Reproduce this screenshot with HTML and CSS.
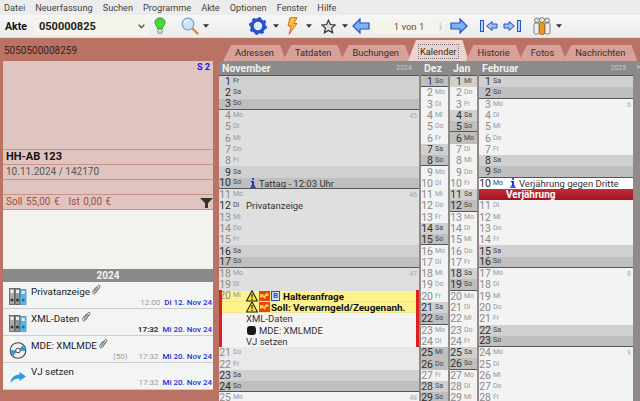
FILE: index.html
```html
<!DOCTYPE html>
<html lang="de">
<head>
  <meta charset="UTF-8" />
  <title>Akte 050000825</title>
  <link rel="stylesheet" href="styles.css">
</head>
<body>

  <svg class="defs" width="0" height="0">
    <symbol id="drop" viewBox="0 0 7 4"><path d="M0 0h7L3.500 4z" fill="#333"/></symbol>
    <symbol id="warn" viewBox="0 0 12 12"><path d="M6 .8 11.500 11H.5z" fill="#fbe33a" stroke="#222" stroke-width="1.100" stroke-linejoin="round"/><path d="M5.400 4h1.200l-.2 4h-.8zM5.400 8.800h1.200V10H5.400z" fill="#111"/></symbol>
    <symbol id="flag" viewBox="0 0 11 10"><rect width="11" height="10" fill="#e8401c"/><path d="M1 3h3l1 2 2-3 3 1-1 2H7l-1 3-2-2-3 1z" fill="#f8d040"/></symbol>
    <symbol id="info" viewBox="0 0 7 12"><path d="M2.600 0h2v2.200h-2zM1 3.500h3.600V9H6v1.400H1V9h1.400V5H1zM0 11h7v1H0z" fill="#1020e0"/></symbol>
    <symbol id="binders" viewBox="0 0 18 17"><g stroke="#444" stroke-width=".7"><rect x=".5" y=".5" width="5" height="16" fill="#aaa"/><rect x="6" y=".5" width="5" height="16" fill="#999"/><rect x="11.500" y="1.500" width="5.500" height="15" fill="#5cb4e4" stroke="#3a8fc0"/></g><g fill="#eee"><rect x="1.500" y="2" width="3" height="3"/><rect x="7" y="2" width="3" height="3"/><rect x="12.700" y="3" width="3" height="3"/></g><g fill="#333"><circle cx="3" cy="12" r="1.500"/><circle cx="8.500" cy="12" r="1.500"/></g><circle cx="14.200" cy="12" r="1.500" fill="#1f6f9f"/></symbol>
    <symbol id="clip" viewBox="0 0 10 11"><path d="M2 6.500 6 1.700c1-1.100 2.700.3 1.700 1.500L3.400 8.300c-.6.7-1.700-.1-1-1L6 3.200M7.700 3.200 3.500 9.200C2 11-.6 9 1 7l3-3.800" fill="none" stroke="#666" stroke-width=".9"/></symbol>
  </svg>

  <div class="menubar">
    <span>Datei</span><span>Neuerfassung</span><span>Suchen</span><span>Programme</span><span>Akte</span><span>Optionen</span><span>Fenster</span><span>Hilfe</span>
  </div>

  <div class="toolbar">
    <b class="akte-label">Akte</b>
    <div class="combo"><b>050000825</b>
      <svg width="7" height="5" viewBox="0 0 7 5"><path d="M.7.7 3.500 3.800 6.300.7" fill="none" stroke="#555" stroke-width="1.400"/></svg>
    </div>
    <svg class="bulb" width="12" height="18" viewBox="0 0 12 18"><path d="M6 1C2.700 1 1 3 1 5.500 1 8 3.500 9.500 3.800 12h4.400C8.500 9.500 11 8 11 5.500 11 3 9.300 1 6 1z" fill="#47d83a" stroke="#2c9a28"/><rect x="3.800" y="12" width="4.400" height="4.500" rx="1.500" fill="#ddd" stroke="#888"/></svg>
    <svg class="lens" width="18" height="18" viewBox="0 0 18 18"><path d="M10.500 10.500 16.500 16.500" stroke="#e08a30" stroke-width="2.400" stroke-linecap="round"/><circle cx="7" cy="7" r="5.800" fill="#cfe6f8" stroke="#7c9fc4" stroke-width="1.300"/><path d="M3.500 6C4 4 5.500 3 7.500 3" stroke="#fff" fill="none" stroke-width="1.200"/></svg>
    <svg class="drop drop-lens" width="6" height="4"><use href="#drop"/></svg>
    <svg class="gear" width="18" height="18" viewBox="0 0 18 18"><circle cx="9" cy="9" r="6" fill="none" stroke="#2a50d0" stroke-width="3.600"/><circle cx="9" cy="9" r="8" fill="none" stroke="#2a50d0" stroke-width="2" stroke-dasharray="3 3.280"/><circle cx="9" cy="9" r="3.200" fill="#dfe8fa"/></svg>
    <svg class="drop" width="6" height="4"><use href="#drop"/></svg>
    <svg class="bolt" width="11" height="18" viewBox="0 0 11 18"><path d="M3 .7h7L6.800 6.500H10L2 17.300 4.300 9H1z" fill="#f8c530" stroke="#d8552a" stroke-width=".9"/></svg>
    <svg class="drop drop-bolt" width="6" height="4"><use href="#drop"/></svg>
    <svg class="star" width="15" height="15" viewBox="0 0 15 15"><path d="M7.500 1.200 9.400 5.500 14 6 10.600 9.100 11.600 13.800 7.500 11.400 3.400 13.800 4.400 9.100 1 6 5.600 5.500z" fill="#ddd" stroke="#333" stroke-width="1.200"/></svg>
    <svg class="drop" width="6" height="4"><use href="#drop"/></svg>
    <svg class="arrow-left" width="18" height="16" viewBox="0 0 18 16"><path d="M8 1 1 8l7 7v-4h9V5H8z" fill="#7fb2f0" stroke="#2255cc" stroke-width="1.200"/></svg>
    <div class="pager">1 von 1<i class="pager-i">i</i></div>
    <svg class="arrow-right" width="18" height="16" viewBox="0 0 18 16"><path d="M10 1l7 7-7 7v-4H1V5h9z" fill="#7fb2f0" stroke="#2255cc" stroke-width="1.200"/></svg>
    <svg class="jump-first" width="18" height="12" viewBox="0 0 18 12"><rect x=".5" y=".5" width="3" height="11" fill="#bcd4f4" stroke="#2255cc"/><path d="M12 1.500 6.500 6l5.500 4.500V8h5V4h-5z" fill="#9cc0f0" stroke="#2255cc"/></svg>
    <svg class="jump-last" width="18" height="12" viewBox="0 0 18 12"><path d="M6 1.500 11.500 6 6 10.500V8H1V4h5z" fill="#9cc0f0" stroke="#2255cc"/><rect x="14.500" y=".5" width="3" height="11" fill="#bcd4f4" stroke="#2255cc"/></svg>
    <svg class="people" width="18" height="18" viewBox="0 0 18 18"><circle cx="4" cy="3.500" r="2.500" fill="#ddd" stroke="#555" stroke-width=".7"/><rect x="1" y="6" width="5" height="11" rx="1.500" fill="#eee" stroke="#555" stroke-width=".7"/><circle cx="14" cy="3.500" r="2.500" fill="#ddd" stroke="#555" stroke-width=".7"/><rect x="12" y="6" width="5" height="11" rx="1.500" fill="#eee" stroke="#555" stroke-width=".7"/><circle cx="9" cy="3" r="2.500" fill="#e8e8e8" stroke="#555" stroke-width=".7"/><rect x="6.500" y="5.500" width="5" height="12" rx="1.500" fill="#ef9a1f" stroke="#9a5a10" stroke-width=".7"/></svg>
    <svg class="drop drop-people" width="6" height="4"><use href="#drop"/></svg>
  </div>

  <div class="main">
    <aside class="left">
      <div class="case-no">5050500008259</div>

      <div class="case-card">
        <div class="photo"><b>S 2</b></div>
        <div class="line plate">HH-AB 123</div>
        <div class="line">10.11.2024 / 142170</div>
        <div class="line"></div>
        <div class="line money">
          <span>Soll 55,00 €</span><span>Ist 0,00 €</span>
          <svg class="funnel" width="13" height="10" viewBox="0 0 13 10"><path d="M0 0h13L8 5v5H5V5z" fill="#333"/></svg>
        </div>
      </div>
      <div class="notes"></div>

      <div class="year">2024</div>
      <ul class="history">
        <li>
          <svg class="h-icon" width="18" height="17"><use href="#binders"/></svg>
          <div class="h-title">Privatanzeige <svg width="10" height="11"><use href="#clip"/></svg></div>
          <div class="h-meta"><span class="h-time">12:00</span><span class="h-date">Di 12. Nov 24</span></div>
        </li>
        <li>
          <svg class="h-icon" width="18" height="17"><use href="#binders"/></svg>
          <div class="h-title">XML-Daten <svg width="10" height="11"><use href="#clip"/></svg></div>
          <div class="h-meta"><span class="h-time now">17:32</span><span class="h-date">Mi 20. Nov 24</span></div>
        </li>
        <li>
          <svg class="h-icon" width="18" height="17" viewBox="0 0 18 17"><circle cx="9" cy="8.500" r="7.800" fill="#eee" stroke="#444" stroke-width="1.100"/><path d="M9 8.500 14 3A7.500 7.500 0 0 1 16 9zM9 8.500 4 14A7.500 7.500 0 0 1 2 8z" fill="#3a9ad0"/><circle cx="9" cy="8.500" r="2.300" fill="#fff" stroke="#444"/></svg>
          <div class="h-title">MDE: XMLMDE <svg width="10" height="11"><use href="#clip"/></svg></div>
          <div class="h-meta"><span class="h-count">(50)</span><span class="h-time">17:32</span><span class="h-date">Mi 20. Nov 24</span></div>
        </li>
        <li>
          <svg class="h-icon" width="16" height="11" viewBox="0 0 16 11"><path d="M9.500 0 16 4.500 9.500 9V6.500C5.500 6.500 3 7.800.5 11 1 6 4 2.800 9.500 2.500z" fill="#2e9bdb"/></svg>
          <div class="h-title">VJ setzen</div>
          <div class="h-meta"><span class="h-time">17:32</span><span class="h-date">Mi 20. Nov 24</span></div>
        </li>
      </ul>
    </aside>

    <section class="right">
      <nav class="tabs">
        <span class="tab">Adressen</span>
        <span class="tab">Tatdaten</span>
        <span class="tab">Buchungen</span>
        <span class="tab active"><em>Kalender</em></span>
        <span class="tab">Historie</span>
        <span class="tab">Fotos</span>
        <span class="tab">Nachrichten</span>
      </nav>

      <div class="calendar">
        <div class="month nov">
          <header><b>November</b><small>2024</small></header>
          <div class="day sa"><i>1</i><u>Fr</u></div>
          <div class="day sa"><i>2</i><u>Sa</u></div>
          <div class="day so wk"><i>3</i><u>So</u></div>
          <div class="day"><i>4</i><u>Mo</u><small>45</small></div>
          <div class="day"><i>5</i><u>Di</u></div>
          <div class="day"><i>6</i><u>Mi</u></div>
          <div class="day"><i>7</i><u>Do</u></div>
          <div class="day"><i>8</i><u>Fr</u></div>
          <div class="day sa"><i>9</i><u>Sa</u></div>
          <div class="day so wk"><i>10</i><u>So</u>
            <span class="ev ev-icon"><svg width="6" height="10"><use href="#info"/></svg>Tattag - 12:03 Uhr</span></div>
          <div class="day"><i>11</i><u>Mo</u><small>46</small></div>
          <div class="day has"><i>12</i><u>Di</u><span class="ev">Privatanzeige</span></div>
          <div class="day"><i>13</i><u>Mi</u></div>
          <div class="day"><i>14</i><u>Do</u></div>
          <div class="day"><i>15</i><u>Fr</u></div>
          <div class="day sa"><i>16</i><u>Sa</u></div>
          <div class="day so wk"><i>17</i><u>So</u></div>
          <div class="day"><i>18</i><u>Mo</u><small>47</small></div>
          <div class="day"><i>19</i><u>Di</u></div>
          <div class="today">
            <div class="day alert"><i>20</i><u>Mi</u>
              <span class="ev bold"><svg width="12" height="12"><use href="#warn"/></svg><svg width="11" height="10"><use href="#flag"/></svg><span class="b-box">B</span>Halteranfrage</span></div>
            <div class="day alert"><span class="ev bold"><svg width="12" height="12"><use href="#warn"/></svg><svg width="11" height="10"><use href="#flag"/></svg>Soll: Verwarngeld/Zeugenanh.</span></div>
            <div class="day light"><span class="ev">XML-Daten</span></div>
            <div class="day light"><span class="ev"><span class="dot"></span>MDE: XMLMDE</span></div>
            <div class="day light"><span class="ev">VJ setzen</span></div>
          </div>
          <div class="day lighter"><i>21</i><u>Do</u></div>
          <div class="day lighter"><i>22</i><u>Fr</u></div>
          <div class="day sa"><i>23</i><u>Sa</u></div>
          <div class="day so wk"><i>24</i><u>So</u></div>
          <div class="day light"><i>25</i><u>Mo</u><small>48</small></div>
        </div>

        <div class="month small">
          <header><b>Dez</b></header>
          <div class="day so wk"><i>1</i><u>So</u></div>
          <div class="day light"><i>2</i><u>Mo</u></div>
          <div class="day light"><i>3</i><u>Di</u></div>
          <div class="day light"><i>4</i><u>Mi</u></div>
          <div class="day light"><i>5</i><u>Do</u></div>
          <div class="day light"><i>6</i><u>Fr</u></div>
          <div class="day sa"><i>7</i><u>Sa</u></div>
          <div class="day so wk"><i>8</i><u>So</u></div>
          <div class="day light"><i>9</i><u>Mo</u></div>
          <div class="day light"><i>10</i><u>Di</u></div>
          <div class="day light"><i>11</i><u>Mi</u></div>
          <div class="day light"><i>12</i><u>Do</u></div>
          <div class="day light"><i>13</i><u>Fr</u></div>
          <div class="day sa"><i>14</i><u>Sa</u></div>
          <div class="day so wk"><i>15</i><u>So</u></div>
          <div class="day light"><i>16</i><u>Mo</u></div>
          <div class="day light"><i>17</i><u>Di</u></div>
          <div class="day light"><i>18</i><u>Mi</u></div>
          <div class="day light"><i>19</i><u>Do</u></div>
          <div class="day light"><i>20</i><u>Fr</u></div>
          <div class="day sa"><i>21</i><u>Sa</u></div>
          <div class="day so wk"><i>22</i><u>So</u></div>
          <div class="day light"><i>23</i><u>Mo</u></div>
          <div class="day light"><i>24</i><u>Di</u></div>
          <div class="day so"><i>25</i><u>Mi</u></div>
          <div class="day so"><i>26</i><u>Do</u></div>
          <div class="day light"><i>27</i><u>Fr</u></div>
          <div class="day sa"><i>28</i><u>Sa</u></div>
          <div class="day so wk"><i>29</i><u>So</u></div>
        </div>

        <div class="month small">
          <header><b>Jan</b></header>
          <div class="day sa"><i>1</i><u>Mi</u></div>
          <div class="day light"><i>2</i><u>Do</u></div>
          <div class="day light"><i>3</i><u>Fr</u></div>
          <div class="day sa"><i>4</i><u>Sa</u></div>
          <div class="day so wk"><i>5</i><u>So</u></div>
          <div class="day so"><i>6</i><u>Mo</u></div>
          <div class="day light"><i>7</i><u>Di</u></div>
          <div class="day light"><i>8</i><u>Mi</u></div>
          <div class="day light"><i>9</i><u>Do</u></div>
          <div class="day light"><i>10</i><u>Fr</u></div>
          <div class="day sa"><i>11</i><u>Sa</u></div>
          <div class="day so wk"><i>12</i><u>So</u></div>
          <div class="day light"><i>13</i><u>Mo</u></div>
          <div class="day light"><i>14</i><u>Di</u></div>
          <div class="day light"><i>15</i><u>Mi</u></div>
          <div class="day light"><i>16</i><u>Do</u></div>
          <div class="day light"><i>17</i><u>Fr</u></div>
          <div class="day sa"><i>18</i><u>Sa</u></div>
          <div class="day so wk"><i>19</i><u>So</u></div>
          <div class="day light"><i>20</i><u>Mo</u></div>
          <div class="day light"><i>21</i><u>Di</u></div>
          <div class="day light"><i>22</i><u>Mi</u></div>
          <div class="day light"><i>23</i><u>Do</u></div>
          <div class="day light"><i>24</i><u>Fr</u></div>
          <div class="day sa"><i>25</i><u>Sa</u></div>
          <div class="day so wk"><i>26</i><u>So</u></div>
          <div class="day light"><i>27</i><u>Mo</u></div>
          <div class="day light"><i>28</i><u>Di</u></div>
          <div class="day light"><i>29</i><u>Mi</u></div>
        </div>

        <div class="month feb">
          <header><b>Februar</b><small>2025</small></header>
          <div class="day sa"><i>1</i><u>Sa</u></div>
          <div class="day so wk"><i>2</i><u>So</u></div>
          <div class="day light"><i>3</i><u>Mo</u><small>6</small></div>
          <div class="day light"><i>4</i><u>Di</u></div>
          <div class="day light"><i>5</i><u>Mi</u></div>
          <div class="day light"><i>6</i><u>Do</u></div>
          <div class="day light"><i>7</i><u>Fr</u></div>
          <div class="day sa"><i>8</i><u>Sa</u></div>
          <div class="day so wk"><i>9</i><u>So</u></div>
          <div class="day white has"><i>10</i><u>Mo</u>
            <span class="ev ev-icon"><svg width="6" height="10"><use href="#info"/></svg>Verjährung gegen Dritte</span></div>
          <div class="day deadline">Verjährung</div>
          <div class="day light"><i>11</i><u>Di</u></div>
          <div class="day light"><i>12</i><u>Mi</u></div>
          <div class="day light"><i>13</i><u>Do</u></div>
          <div class="day light"><i>14</i><u>Fr</u></div>
          <div class="day sa"><i>15</i><u>Sa</u></div>
          <div class="day so wk"><i>16</i><u>So</u></div>
          <div class="day light"><i>17</i><u>Mo</u><small>8</small></div>
          <div class="day light"><i>18</i><u>Di</u></div>
          <div class="day light"><i>19</i><u>Mi</u></div>
          <div class="day light"><i>20</i><u>Do</u></div>
          <div class="day light"><i>21</i><u>Fr</u></div>
          <div class="day sa"><i>22</i><u>Sa</u></div>
          <div class="day so wk"><i>23</i><u>So</u></div>
          <div class="day light"><i>24</i><u>Mo</u><small>9</small></div>
          <div class="day light"><i>25</i><u>Di</u></div>
          <div class="day light"><i>26</i><u>Mi</u></div>
          <div class="day light"><i>27</i><u>Do</u></div>
          <div class="day light"><i>28</i><u>Fr</u></div>
        </div>
        <span class="more">»</span>
      </div>
    </section>
  </div>

</body>
</html>
```

FILE: styles.css
```css
* {
  box-sizing: border-box;
}

html, body {
  margin: 0;
  height: 401px;
  overflow: hidden;
}

body {
  font-family: Roboto, sans-serif;
  font-size: 10px;
  color: #333;
  background: #b97264;
}

.defs {
  position: absolute;
}

/* menu + toolbar */
.menubar {
  height: 15px;
  background: #ececec;
  display: flex;
  align-items: center;
  padding-left: 4px;
  gap: 10px;
  font-size: 9.200px;
  color: #444;
}

.toolbar {
  height: 23px;
  background: linear-gradient(#f6f6f6, #ebebeb);
  border-bottom: 1px solid #ddd;
  display: flex;
  align-items: center;
  padding-left: 5px;
}

.toolbar svg {
  flex: none;
}

.akte-label {
  font-size: 10.500px;
  color: #111;
  width: 29px;
}

.combo {
  width: 114px;
  height: 17px;
  background: #f5f4ea;
  display: flex;
  align-items: center;
  justify-content: space-between;
  padding: 0 3px 0 5px;
  font-size: 11px;
  color: #222;
}

.bulb { margin-left: 6px; }
.lens { margin-left: 15px; }
.drop { margin-left: 6px; }
.drop-lens { margin-left: 4px; }
.drop-bolt { margin-left: 8px; }
.drop-people { margin-left: 5px; }
.gear { margin-left: 40px; }
.bolt { margin-left: 8px; }
.star { margin-left: 9px; }
.arrow-left { margin-left: 4px; }
.arrow-right { margin-left: 5px; }
.jump-first { margin-left: 12px; }
.jump-last { margin-left: 5px; }
.people { margin-left: 12px; }

.pager {
  width: 72px;
  height: 15px;
  margin-left: 3px;
  background: #f5f4ea;
  display: flex;
  align-items: center;
  justify-content: center;
  position: relative;
  color: #555;
  font-size: 9.500px;
}

.pager-i {
  position: absolute;
  right: 3px;
  top: 1px;
  font: bold 11px "Liberation Serif", serif;
  color: #ccc;
}

/* main split */
.main {
  display: flex;
  height: 363px;
}

.left {
  width: 219px;
  flex: none;
  padding-left: 3px;
}

.case-no {
  height: 23px;
  font-size: 10px;
  line-height: 25px;
  color: #3a1f1a;
  padding-left: 1px;
}

.case-card {
  width: 210px;
  background: #e0c4c0;
}

.photo {
  height: 89px;
  text-align: right;
  padding-right: 3px;
  font-size: 9px;
  line-height: 12px;
  color: #1414e8;
  border-bottom: 1px solid #c99288;
}

.line {
  height: 15px;
  line-height: 14px;
  padding-left: 3px;
  border-bottom: 1px solid #c99288;
  color: #555;
  font-size: 10px;
  position: relative;
}

.plate {
  font-size: 11px;
  font-weight: bold;
  color: #111;
}

.money {
  color: #a84a40;
  font-size: 10px;
  word-spacing: 1px;
  display: flex;
  gap: 9px;
  padding-left: 3px;
}

.funnel {
  position: absolute;
  right: 0;
  top: 3px;
}

.notes {
  width: 210px;
  height: 59px;
  background: #f4f2ec;
}

.year {
  width: 210px;
  height: 13px;
  background: #8a8a8a;
  color: #f2f2f2;
  font-weight: bold;
  font-size: 10px;
  line-height: 13px;
  text-align: center;
}

.history {
  list-style: none;
  margin: 0;
  padding: 0;
  width: 210px;
  background: #f3f5f5;
}

.history li {
  height: 27px;
  position: relative;
  border-bottom: 1px solid #ccc;
  padding: 2px 0 0 28px;
}

.h-icon {
  position: absolute;
  left: 6px;
  top: 6px;
}

.history li:last-child .h-icon {
  left: 7px;
  top: 9px;
}

.h-title {
  font-size: 9.800px;
  line-height: 13px;
  color: #222;
}

.h-meta {
  display: flex;
  justify-content: flex-end;
  gap: 4px;
  padding-right: 1px;
  font-size: 8px;
  line-height: 10px;
}

.h-time {
  color: #999;
}

.h-time.now {
  color: #333;
  font-weight: bold;
}

.h-count {
  color: #999;
  margin-right: 7px;
}

.h-date {
  color: #2d2dd8;
  font-weight: 500;
}

/* tabs */
.tabs {
  height: 23px;
  display: flex;
  align-items: flex-end;
  padding-left: 4px;
}

.tab {
  height: 16px;
  padding: 0 12px;
  margin-right: -3px;
  font-size: 9.300px;
  line-height: 15px;
  color: #3a2a28;
  background: #d6a198;
  clip-path: polygon(8px 0, calc(100% - 6px) 0, 100% 100%, 0 100%);
}

.tab.active {
  height: 21px;
  padding-top: 4px;
  background: #edd2cd;
}

.tab em {
  font-style: normal;
  outline: 1px dotted #777;
  outline-offset: 1px;
}

/* calendar */
.calendar {
  display: flex;
  gap: 2px;
  width: 421px;
  height: 340px;
  overflow: hidden;
  background: #8f8a88;
  position: relative;
}

.month {
  flex: none;
}

.nov { width: 200px; }
.small { width: 27px; }
.feb { width: 154px; }

.month header {
  height: 15px;
  background: #8b8b8b;
  border-bottom: 1px solid #555;
  color: #f0f0f0;
  display: flex;
  justify-content: space-between;
  align-items: center;
  padding: 0 7px 0 3px;
  font-size: 10.500px;
}

.month header small {
  font-size: 7px;
  color: #c8c8c8;
}

.more {
  position: absolute;
  right: 0;
  top: 1px;
  font-size: 8px;
  color: #ddd;
}

.day {
  height: 11.300px;
  background: #dfdfdf;
  display: flex;
  align-items: center;
  position: relative;
  white-space: nowrap;
}

.day.sa { background: #d0d0d0; }
.day.so { background: #bfbfbf; }
.day.light { background: #f3f3f3; }
.day.lighter { background: #e9e9e9; }
.day.white { background: #fff; }
.day.wk { border-bottom: 1px solid #555; }

.day i {
  font-style: normal;
  font-size: 10.500px;
  line-height: 11px;
  width: 12px;
  text-align: right;
  color: #8a8a8a;
  flex: none;
}

.day u {
  text-decoration: none;
  font-size: 7px;
  line-height: 11px;
  margin-left: 2px;
  color: #999;
}

.day.sa i, .day.so i, .day.has i {
  color: #2c2c2c;
}

.day.sa u, .day.so u, .day.has u {
  color: #444;
}

.day small {
  position: absolute;
  right: 2px;
  top: 2px;
  font-size: 7px;
  line-height: 8px;
  color: #aaa;
}

.ev {
  position: absolute;
  left: 27px;
  top: 0;
  height: 11px;
  display: flex;
  align-items: center;
  font-size: 9.500px;
  color: #333;
}

.ev-icon {
  left: 31px;
  gap: 3px;
}

.bold {
  font-size: 9.900px;
  font-weight: bold;
  color: #111;
  gap: 1px;
}

.today {
  position: relative;
}

.today::before,
.today::after {
  content: "";
  position: absolute;
  top: -1px;
  height: 57px;
  width: 3px;
  background: #e02020;
  z-index: 1;
}

.today::before { left: 0; }
.today::after { right: 0; }

.day.alert {
  background: #fdf28c;
  border-bottom: 1px solid #f0e890;
}

.b-box {
  width: 9px;
  height: 10px;
  margin: 0 2px 0 0;
  border: 1px solid #2a50c0;
  background: #cfe0fa;
  color: #2a50c0;
  font-size: 8px;
  line-height: 8px;
  text-align: center;
}

.dot {
  width: 9px;
  height: 9px;
  border-radius: 3px;
  background: #1a1a1a;
  margin-right: 3px;
  margin-left: 1px;
}

.day.deadline {
  background: linear-gradient(#c72a3a, #9c1620);
  color: #fff;
  font-weight: bold;
  font-size: 10px;
  padding-left: 27px;
}
```
